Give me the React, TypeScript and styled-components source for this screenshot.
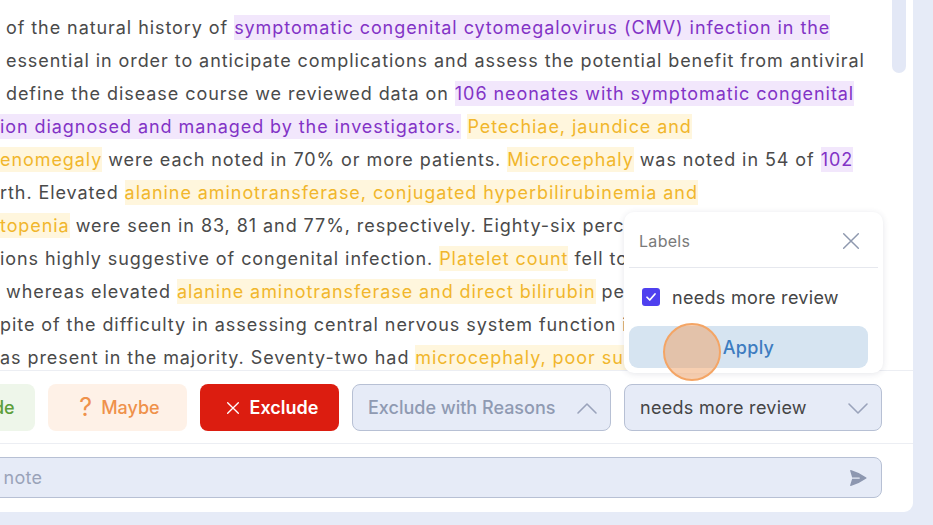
import * as React from "react"
import styled, { createGlobalStyle } from "styled-components"

const GlobalStyle = createGlobalStyle`
  html, body {
    margin: 0;
    padding: 0;
    background: #e6ebf7;
    overflow: hidden;
  }
  body {
    font-family: Inter, "Noto Sans", "Open Sans", sans-serif;
  }
`

/**
 * Styled Components
 */

const Page = styled.div`
  width: 933px;
  height: 525px;
  display: flex;
  align-items: flex-start;
  background: #e6ebf7;
  overflow: hidden;
`

const Card = styled.div`
  position: relative;
  width: 913px;
  height: 512px;
  background: #fff;
  border-radius: 0 0 9px 0;
  display: flex;
  flex-direction: column;
  overflow: hidden;
`

const Reader = styled.div`
  height: 370px;
  flex: 0 0 auto;
  display: flex;
  border-bottom: 1px solid #eceef3;
`

const TextPane = styled.div`
  flex: 1;
  min-width: 0;
  padding-top: 11px;
  overflow: hidden;
  font-size: 18px;
  line-height: 33px;
  letter-spacing: 0.93px;
  color: #4a4a4a;
`

const Line = styled.div`
  white-space: pre;
`

const Mark = styled.span<{ $tone: "purple" | "yellow" }>`
  padding: 2px 0;
  color: ${(p) => (p.$tone === "purple" ? "#8233c6" : "#f1b62c")};
  background: ${(p) => (p.$tone === "purple" ? "#f2e7fc" : "#fff6dd")};
`

const ScrollTrack = styled.div`
  width: 14px;
  margin-right: 7px;
  flex: 0 0 auto;
`

const ScrollThumb = styled.div`
  height: 73px;
  background: #e3e8f6;
  border-radius: 0 0 7px 7px;
`

const Toolbar = styled.div`
  display: flex;
  gap: 13px;
  margin-left: -104px;
  padding: 13px 0 12px;
  border-bottom: 1px solid #eceef3;
`

const tones = {
  include: { bg: "#eef6ea", fg: "#5c9e3a", weight: 500, pad: 8 },
  maybe: { bg: "#fef1e7", fg: "#ef914b", weight: 500, pad: 4 },
  exclude: { bg: "#dc1d10", fg: "#ffffff", weight: 600, pad: 4 },
}

const DecisionButton = styled.button<{ $tone: keyof typeof tones }>`
  width: 139px;
  height: 47px;
  border-radius: 8px;
  border: none;
  background: ${(p) => tones[p.$tone].bg};
  color: ${(p) => tones[p.$tone].fg};
  font-family: inherit;
  font-size: 18px;
  font-weight: ${(p) => tones[p.$tone].weight};
  display: flex;
  align-items: center;
  justify-content: center;
  gap: 9px;
  padding: 0 0 0 ${(p) => tones[p.$tone].pad}px;
`

const QuestionMark = styled.span`
  font-size: 25px;
  font-weight: 400;
  line-height: 1;
`

const SelectButton = styled.button<{ $muted?: boolean; $width: number }>`
  width: ${(p) => p.$width}px;
  height: 47px;
  border-radius: 8px;
  border: 1px solid #b7c0d4;
  background: #e6ebf7;
  color: ${(p) => (p.$muted ? "#8f9ab2" : "#454545")};
  font-family: inherit;
  font-size: 18px;
  font-weight: ${(p) => (p.$muted ? 500 : 400)};
  letter-spacing: ${(p) => (p.$muted ? 0 : 0.3)}px;
  display: flex;
  align-items: center;
  justify-content: space-between;
  padding: 0 12px 0 15px;
`

const NoteRow = styled.div`
  padding: 13px 0 14px;
  margin-left: -72px;
`

const NoteBox = styled.div`
  width: 954px;
  height: 41px;
  box-sizing: border-box;
  border: 1px solid #b7c0d4;
  border-radius: 8px;
  background: #e6ebf7;
  display: flex;
  align-items: center;
  padding: 0 13px 0 18px;
`

const NoteInput = styled.input`
  flex: 1;
  border: none;
  background: transparent;
  font-family: inherit;
  font-size: 18px;
  letter-spacing: 0.3px;
  color: #454545;
  outline: none;
  padding: 0;
  &::placeholder {
    color: #9aa3b9;
  }
`

const Popover = styled.div`
  position: absolute;
  left: 624px;
  top: 212px;
  width: 259px;
  height: 161px;
  box-sizing: border-box;
  background: #fff;
  border-radius: 10px;
  box-shadow: 0 1px 6px rgba(40, 50, 80, 0.12);
  padding: 0 5px 5px;
  display: flex;
  flex-direction: column;
`

const PopoverHeader = styled.div`
  height: 56px;
  flex: 0 0 auto;
  box-sizing: border-box;
  padding: 2px 16px 0 10px;
  display: flex;
  align-items: center;
  justify-content: space-between;
  border-bottom: 1px solid #e6e8ee;
  color: #7a7a7a;
  font-size: 16px;
  letter-spacing: 0.3px;
`

const Option = styled.label`
  display: flex;
  align-items: center;
  gap: 12px;
  height: 58px;
  flex: 0 0 auto;
  padding: 0 0 0 13px;
  box-sizing: border-box;
  font-size: 18px;
  letter-spacing: 0.3px;
  color: #454545;
`

const Check = styled.span`
  width: 18px;
  height: 18px;
  border-radius: 3px;
  background: #4f40ef;
  display: flex;
  align-items: center;
  justify-content: center;
`

const ApplyButton = styled.button`
  position: relative;
  width: 239px;
  height: 45px;
  border: none;
  border-radius: 9px;
  background: #d6e4f1;
  color: #3d7cc0;
  font-family: inherit;
  font-size: 18px;
  font-weight: 500;
  letter-spacing: 0.3px;
  padding: 0;
`

const Cursor = styled.span`
  position: absolute;
  left: 34px;
  top: -3px;
  width: 54px;
  height: 54px;
  border-radius: 50%;
  background: rgba(240, 160, 100, 0.5);
  border: 2px solid #f4a565;
`

const Chevron = ({ up }: { up?: boolean }) => (
  <svg width="22" height="14" viewBox="0 0 22 14" fill="none">
    <path
      d={up ? "M2 12 L11 3 L20 12" : "M2 3 L11 12 L20 3"}
      stroke="#9aa3bb"
      strokeWidth="1.6"
      strokeLinecap="round"
      strokeLinejoin="round"
    />
  </svg>
)

const XIcon = ({ size, color, width }: { size: number; color: string; width: number }) => (
  <svg width={size} height={size} viewBox="0 0 24 24" fill="none">
    <path d="M4 4 L20 20 M20 4 L4 20" stroke={color} strokeWidth={width} strokeLinecap="round" />
  </svg>
)

const SendIcon = () => (
  <svg width="20" height="20" viewBox="0 0 24 24" fill="#8d97b0">
    <path d="M3.478 2.405a.75.75 0 00-.926.94l2.432 7.905H13.5a.75.75 0 010 1.5H4.984l-2.432 7.905a.75.75 0 00.926.94 60.519 60.519 0 0018.445-8.986.75.75 0 000-1.218A60.517 60.517 0 003.478 2.405z" />
  </svg>
)

const P = ({ children }: { children: React.ReactNode }) => <Mark $tone="purple">{children}</Mark>
const Y = ({ children }: { children: React.ReactNode }) => <Mark $tone="yellow">{children}</Mark>

export default function App() {
  return (
    <>
      <GlobalStyle />
      <Page>
        <Card>
          <Reader>
            <TextPane>
              <Line>
                {" of the natural history of "}
                <P>symptomatic congenital cytomegalovirus (CMV) infection in the</P>
              </Line>
              <Line>{" essential in order to anticipate complications and assess the potential benefit from antiviral"}</Line>
              <Line>
                {" define the disease course we reviewed data on "}
                <P>106 neonates with symptomatic congenital</P>
              </Line>
              <Line>
                <P>ion diagnosed and managed by the investigators.</P> <Y>Petechiae, jaundice and</Y>
              </Line>
              <Line>
                <Y>enomegaly</Y> were each noted in 70% or more patients. <Y>Microcephaly</Y> was noted in 54 of{" "}
                <P>102</P>
              </Line>
              <Line>
                rth. Elevated <Y>alanine aminotransferase, conjugated hyperbilirubinemia and</Y>
              </Line>
              <Line>
                <Y>topenia</Y> were seen in 83, 81 and 77%, respectively. Eighty-six percent of
              </Line>
              <Line>
                ions highly suggestive of congenital infection. <Y>Platelet count</Y> fell to its
              </Line>
              <Line>
                {" whereas elevated "}
                <Y>alanine aminotransferase and direct bilirubin</Y> peaked
              </Line>
              <Line>pite of the difficulty in assessing central nervous system function in the</Line>
              <Line>
                as present in the majority. Seventy-two had <Y>microcephaly, poor suck</Y>
              </Line>
            </TextPane>
            <ScrollTrack>
              <ScrollThumb />
            </ScrollTrack>
          </Reader>

          <Toolbar>
            <DecisionButton $tone="include">
              <svg width="18" height="18" viewBox="0 0 24 24" fill="none">
                <path d="M4 12.5 L9.5 18 L20 6" stroke="#5c9e3a" strokeWidth="2" strokeLinecap="round" strokeLinejoin="round" />
              </svg>
              Include
            </DecisionButton>
            <DecisionButton $tone="maybe">
              <QuestionMark>?</QuestionMark>
              Maybe
            </DecisionButton>
            <DecisionButton $tone="exclude">
              <XIcon size={16} color="#ffffff" width={2} />
              Exclude
            </DecisionButton>
            <SelectButton $muted $width={259}>
              Exclude with Reasons
              <Chevron up />
            </SelectButton>
            <SelectButton $width={258}>
              needs more review
              <Chevron />
            </SelectButton>
          </Toolbar>

          <NoteRow>
            <NoteBox>
              <NoteInput placeholder="Add a note" />
              <SendIcon />
            </NoteBox>
          </NoteRow>

          <Popover>
            <PopoverHeader>
              Labels
              <XIcon size={22} color="#8e98ae" width={1.6} />
            </PopoverHeader>
            <Option>
              <Check>
                <svg width="12" height="12" viewBox="0 0 24 24" fill="none">
                  <path d="M4 12.5 L9.5 18 L20 6" stroke="#fff" strokeWidth="3.5" strokeLinecap="round" strokeLinejoin="round" />
                </svg>
              </Check>
              needs more review
            </Option>
            <ApplyButton>
              Apply
              <Cursor />
            </ApplyButton>
          </Popover>
        </Card>
      </Page>
    </>
  )
}
